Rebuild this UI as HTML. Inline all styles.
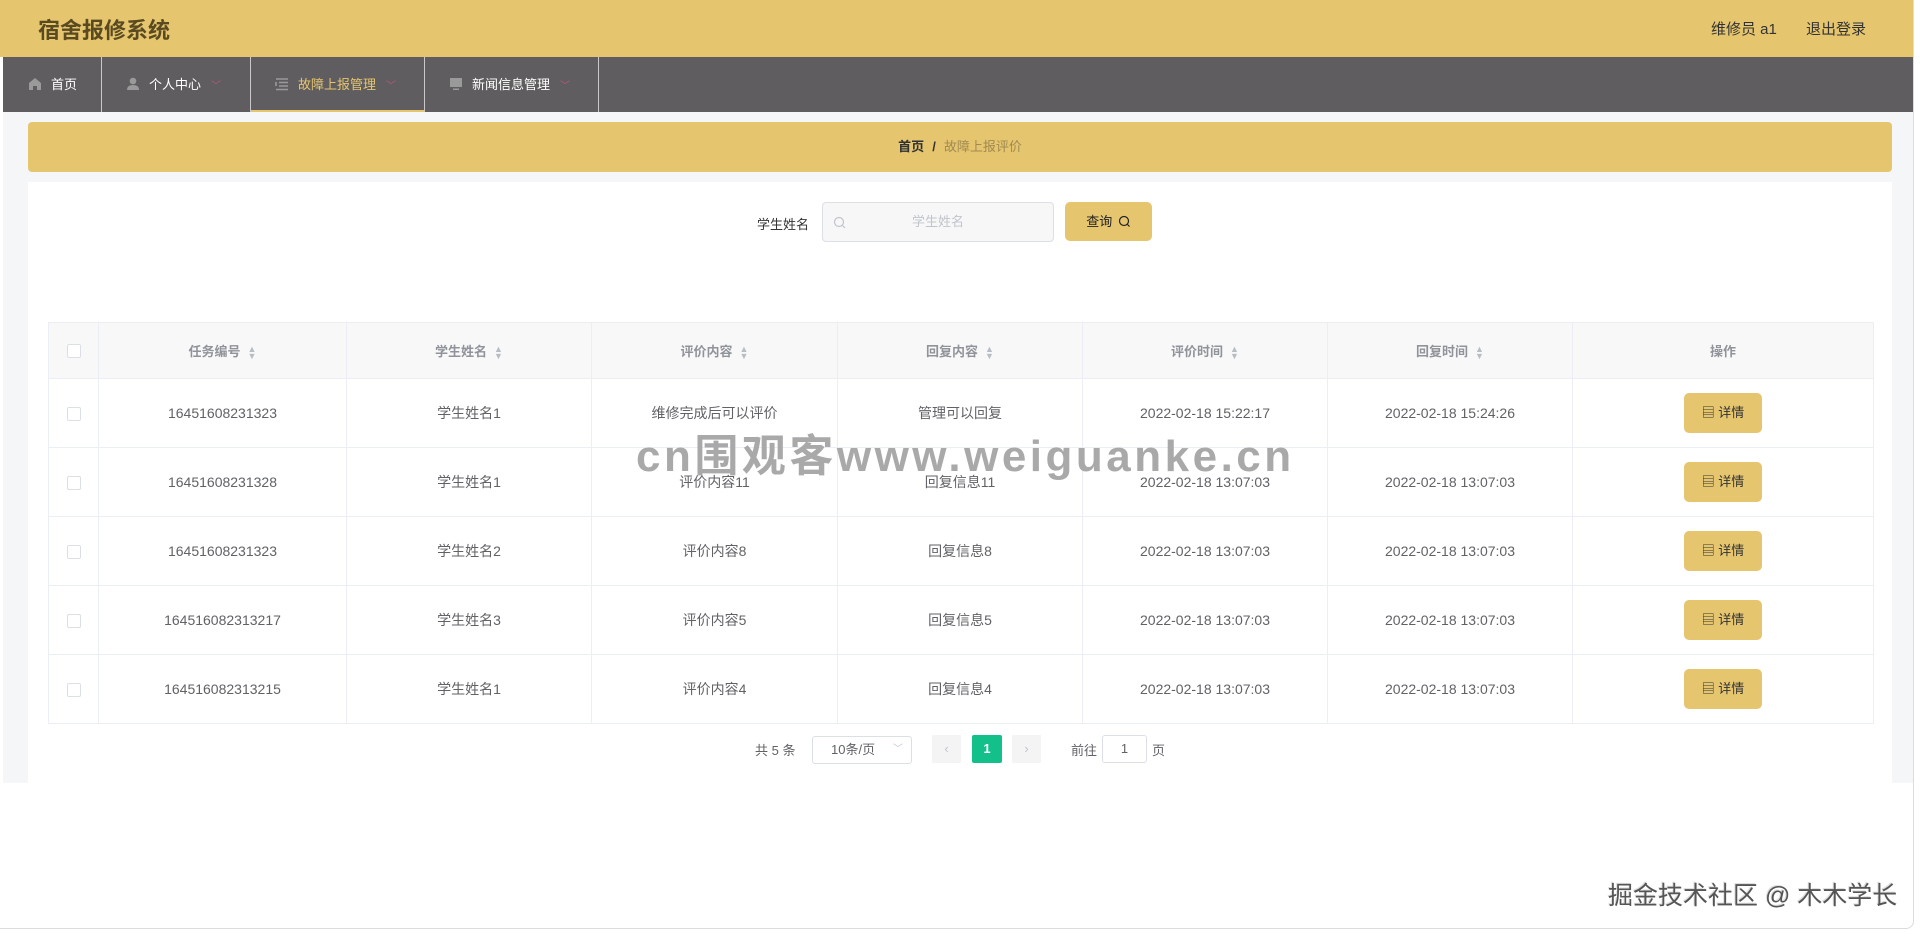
<!DOCTYPE html>
<html><head><meta charset="utf-8">
<style>
*{box-sizing:border-box;margin:0;padding:0}
body{width:1920px;height:932px;overflow:hidden;background:#fff;font-family:"Liberation Sans","Noto Sans CJK SC",sans-serif;position:relative;font-size:13px;color:#606266}
.frame{position:absolute;left:0;top:0;width:1914px;height:929px;border-right:1px solid #dcdcdc;border-bottom:1px solid #dcdcdc;border-bottom-right-radius:8px;background:#fff}
.hdr{position:absolute;left:0;top:0;width:1913px;height:57px;background:#e6c56f}
.title{position:absolute;left:38px;top:13px;font-size:22px;font-weight:bold;color:#5a4a20}
.user{position:absolute;top:18px;font-size:15px;color:#333}
.nav{position:absolute;left:3px;top:57px;width:1910px;height:55px;background:#5f5d5f}
.ni{position:absolute;top:0;height:55px;border-right:1px solid #c9c9c9;color:#fff;font-size:13px;line-height:55px;white-space:nowrap}
.ni .ar{color:#c0567a;font-size:10px;margin-left:10px}
.grey{position:absolute;left:3px;top:112px;width:1910px;height:671px;background:#f5f6f8}
.bc{position:absolute;left:28px;top:122px;width:1864px;height:50px;background:#e6c56f;border-radius:4px;text-align:center;line-height:50px;font-size:13px}
.panel{position:absolute;left:28px;top:182px;width:1864px;height:601px;background:#fff}
table{position:absolute;left:48px;top:322px;width:1825px;border-collapse:collapse;table-layout:fixed}
td,th{border:1px solid #ebeef5;text-align:center;font-size:14px;color:#606266;font-weight:normal}
th{height:56px;background:#f8f8f9;color:#909399;font-weight:bold;font-size:13px}
td{height:69px}
.cb{display:inline-block;width:14px;height:14px;border:1px solid #dcdfe6;border-radius:2px;background:#fff;vertical-align:middle}
.sort{display:inline-block;margin-left:7px;color:#b8bcc4;font-size:9px;line-height:7px;vertical-align:middle}
.btn{display:inline-block;width:78px;height:40px;background:#e6c56f;border-radius:5px;line-height:40px;font-size:13px;color:#333}
.wm{position:absolute;left:636px;top:420px;font-size:44px;font-weight:bold;color:#a9a9a9;letter-spacing:3.5px;white-space:nowrap}
</style></head><body>
<div class="frame"></div>
<div class="hdr"><div class="title">宿舍报修系统</div>
<div class="user" style="left:1711px">维修员 a1</div><div class="user" style="left:1806px">退出登录</div></div>
<div class="nav">
<div class="ni" style="left:0;width:99px;padding-left:25px">
<svg width="14" height="14" viewBox="0 0 14 14" style="vertical-align:-2px;margin-right:9px"><path d="M7 1 L13 6 V13 H9 V9 H5 V13 H1 V6 Z" fill="#9a9a9a"/></svg>首页</div>
<div class="ni" style="left:99px;width:149px;padding-left:24px">
<svg width="14" height="14" viewBox="0 0 14 14" style="vertical-align:-2px;margin-right:9px"><circle cx="7" cy="4" r="3.3" fill="#9a9a9a"/><path d="M1 13 Q1 8 7 8 Q13 8 13 13 Z" fill="#9a9a9a"/></svg>个人中心<span class="ar">﹀</span></div>
<div class="ni" style="left:248px;width:174px;padding-left:24px;color:#e6c56f;border-bottom:2px solid #e6c56f">
<svg width="14" height="14" viewBox="0 0 14 14" style="vertical-align:-2px;margin-right:9px"><path d="M1 2h12M4 5.5h9M1 5v4M4 9h9M1 12.5h12" stroke="#9a9a9a" stroke-width="1.6"/></svg>故障上报管理<span class="ar">﹀</span></div>
<div class="ni" style="left:422px;width:174px;padding-left:24px">
<svg width="14" height="14" viewBox="0 0 14 14" style="vertical-align:-2px;margin-right:9px"><rect x="1" y="1" width="12" height="9" fill="#9a9a9a"/><rect x="4" y="11.5" width="6" height="1.5" fill="#9a9a9a"/></svg>新闻信息管理<span class="ar">﹀</span></div>
</div>
<div class="grey"></div>
<div class="bc"><b style="color:#303133">首页</b><span style="margin:0 8px;color:#333;font-weight:bold">/</span><span style="color:#a08a50">故障上报评价</span></div>
<div class="panel"></div>
<div style="position:absolute;left:757px;top:214px;font-size:13px;color:#333">学生姓名</div>
<div style="position:absolute;left:822px;top:202px;width:232px;height:40px;border:1px solid #dcdfe6;border-radius:4px;background:#f7f7f8;line-height:38px;text-align:center;color:#c0c4cc;font-size:13px">
<svg width="13" height="13" viewBox="0 0 13 13" style="position:absolute;left:10px;top:13px"><circle cx="6" cy="6" r="4.5" fill="none" stroke="#c0c4cc" stroke-width="1.2"/><path d="M9.5 9.5l2.5 2.5" stroke="#c0c4cc" stroke-width="1.2"/></svg>学生姓名</div>
<div style="position:absolute;left:1065px;top:202px;width:87px;height:39px;border-radius:5px;background:#e6c56f;line-height:39px;text-align:center;font-size:13px;color:#222">查询
<svg width="13" height="13" viewBox="0 0 13 13" style="vertical-align:-2px;margin-left:2px"><circle cx="6" cy="6" r="4.5" fill="none" stroke="#222" stroke-width="1.2"/><path d="M9.5 9.5l2 2" stroke="#222" stroke-width="1.2"/></svg></div>
<table>
<colgroup><col style="width:50px"><col style="width:248px"><col style="width:245px"><col style="width:246px"><col style="width:245px"><col style="width:245px"><col style="width:245px"><col style="width:301px"></colgroup>
<tr><th><span class="cb"></span></th><th>任务编号<span class="sort">▲<br>▼</span></th><th>学生姓名<span class="sort">▲<br>▼</span></th><th>评价内容<span class="sort">▲<br>▼</span></th><th>回复内容<span class="sort">▲<br>▼</span></th><th>评价时间<span class="sort">▲<br>▼</span></th><th>回复时间<span class="sort">▲<br>▼</span></th><th>操作</th></tr>
<tr><td><span class="cb"></span></td><td>16451608231323</td><td>学生姓名1</td><td>维修完成后可以评价</td><td>管理可以回复</td><td>2022-02-18 15:22:17</td><td>2022-02-18 15:24:26</td><td><span class="btn">▤ 详情</span></td></tr>
<tr><td><span class="cb"></span></td><td>16451608231328</td><td>学生姓名1</td><td>评价内容11</td><td>回复信息11</td><td>2022-02-18 13:07:03</td><td>2022-02-18 13:07:03</td><td><span class="btn">▤ 详情</span></td></tr>
<tr><td><span class="cb"></span></td><td>16451608231323</td><td>学生姓名2</td><td>评价内容8</td><td>回复信息8</td><td>2022-02-18 13:07:03</td><td>2022-02-18 13:07:03</td><td><span class="btn">▤ 详情</span></td></tr>
<tr><td><span class="cb"></span></td><td>164516082313217</td><td>学生姓名3</td><td>评价内容5</td><td>回复信息5</td><td>2022-02-18 13:07:03</td><td>2022-02-18 13:07:03</td><td><span class="btn">▤ 详情</span></td></tr>
<tr><td><span class="cb"></span></td><td>164516082313215</td><td>学生姓名1</td><td>评价内容4</td><td>回复信息4</td><td>2022-02-18 13:07:03</td><td>2022-02-18 13:07:03</td><td><span class="btn">▤ 详情</span></td></tr>
</table>
<div style="position:absolute;left:755px;top:740px;font-size:13px">共 5 条</div>
<div style="position:absolute;left:812px;top:736px;width:100px;height:28px;border:1px solid #dcdfe6;border-radius:3px;font-size:13px;line-height:26px;padding-left:18px">10条/页<span style="position:absolute;right:8px;color:#c0c4cc;font-size:10px">﹀</span></div>
<div style="position:absolute;left:932px;top:735px;width:29px;height:28px;background:#f4f4f5;color:#c0c4cc;text-align:center;line-height:28px">‹</div>
<div style="position:absolute;left:972px;top:735px;width:30px;height:28px;background:#13c08a;color:#fff;text-align:center;line-height:28px;font-weight:bold;border-radius:2px">1</div>
<div style="position:absolute;left:1012px;top:735px;width:29px;height:28px;background:#f4f4f5;color:#c0c4cc;text-align:center;line-height:28px">›</div>
<div style="position:absolute;left:1071px;top:740px;font-size:13px">前往</div>
<div style="position:absolute;left:1102px;top:735px;width:45px;height:28px;border:1px solid #dcdfe6;border-radius:3px;text-align:center;line-height:26px;font-size:13px">1</div>
<div style="position:absolute;left:1152px;top:740px;font-size:13px">页</div>
<div class="wm">cn围观客www.weiguanke.cn</div>
<div style="position:absolute;left:1608px;top:876px;font-size:25px;color:#555;text-shadow:1px 1px 0 #fff,-1px -1px 0 #ddd;white-space:nowrap">掘金技术社区 @ 木木学长</div>
</body></html>
